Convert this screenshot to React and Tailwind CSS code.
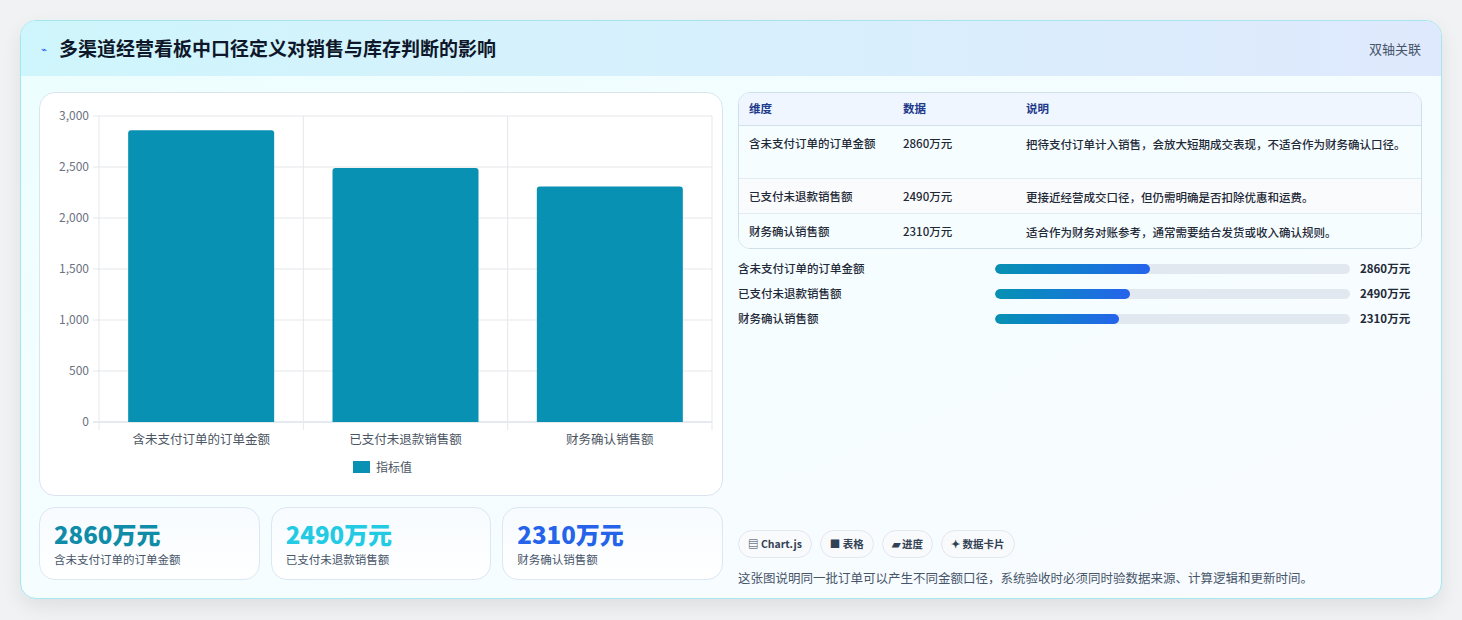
export default function App() {
  const bars = [
    { label: "含未支付订单的订单金额", v: 2860 },
    { label: "已支付未退款销售额", v: 2490 },
    { label: "财务确认销售额", v: 2310 },
  ];
  const ticks = [3000, 2500, 2000, 1500, 1000, 500, 0];
  // svg coords relative to chart card (x0=39,y0=92)
  const px0 = 59, px1 = 672, py0 = 23, py1 = 329;
  const cw = (px1 - px0) / 3;
  const font = { fontFamily: '"Noto Sans CJK SC", "Noto Sans", sans-serif' };
  return (
    <div className="w-[1462px] h-[620px] bg-[#f1f2f4] pt-5 pl-5" style={font}>
      <div className="w-[1422px] h-[579px] rounded-2xl border border-[#a5e6ef] bg-gradient-to-br from-[#ecfeff] via-[#f5fdff] to-[#f8fbff] shadow-[0_8px_20px_rgba(0,0,0,0.08)] overflow-hidden flex flex-col">
        <div className="h-[55px] flex items-center justify-between px-5 bg-gradient-to-r from-[#cff6fc] to-[#dfe9fd] shrink-0">
          <div className="flex items-center gap-3">
            <span className="text-[10px] text-[#2563eb]">⌁</span>
            <span className="text-[19px] font-bold text-[#0f172a]">多渠道经营看板中口径定义对销售与库存判断的影响</span>
          </div>
          <span className="text-[13px] text-[#475569]">双轴关联</span>
        </div>
        <div className="flex gap-[15px] px-[18px] pt-[16px]">
          <div className="w-[684px] flex flex-col gap-[11px]">
            <div className="h-[404px] rounded-2xl border border-[#dbe4ee] bg-white">
              <svg width="684" height="404" className="block">
                {ticks.map((t, i) => {
                  const y = py0 + ((py1 - py0) * i) / 6;
                  return (
                    <g key={t}>
                      <line x1={px0 - 6} x2={px1} y1={y} y2={y} stroke={t === 0 ? "#cbd5e1" : "#e5e7eb"} />
                      <text x={px0 - 10} y={y + 4} textAnchor="end" fontSize="12" fill="#6b7280" style={font}>{t.toLocaleString("en-US")}</text>
                    </g>
                  );
                })}
                {[0, 1, 2, 3].map((i) => (
                  <line key={i} x1={px0 + cw * i} x2={px0 + cw * i} y1={py0} y2={py1 + 8} stroke="#e5e7eb" />
                ))}
                {bars.map((b, i) => {
                  const h = ((py1 - py0) * b.v) / 3000;
                  const cx = px0 + cw * i + cw / 2;
                  return (
                    <g key={b.label}>
                      <path d={`M${cx - 73} ${py1} V${py1 - h + 3} Q${cx - 73} ${py1 - h} ${cx - 70} ${py1 - h} H${cx + 70} Q${cx + 73} ${py1 - h} ${cx + 73} ${py1 - h + 3} V${py1} Z`} fill="#0891b2" />
                      <text x={cx} y={py1 + 22} textAnchor="middle" fontSize="12.5" fill="#4b5563" style={font}>{b.label}</text>
                    </g>
                  );
                })}
                <rect x="313" y="368" width="17" height="12" fill="#0891b2" />
                <text x="336" y="379" fontSize="12" fill="#4b5563" style={font}>指标值</text>
              </svg>
            </div>
            <div className="grid grid-cols-3 gap-[11px]">
              {[
                ["2860万元", "含未支付订单的订单金额", "text-[#0e8ca8]"],
                ["2490万元", "已支付未退款销售额", "text-[#22cbe3]"],
                ["2310万元", "财务确认销售额", "text-[#2563eb]"],
              ].map(([v, l, c]) => (
                <div key={l} className="h-[73px] rounded-2xl border border-[#dbe7f3] bg-gradient-to-b from-[#f7fbff] to-white px-[14px] pt-[10px]">
                  <div className={`text-[24px] font-extrabold leading-[32px] ${c}`}>{v}</div>
                  <div className="text-[11.5px] text-[#475569] mt-[1px]">{l}</div>
                </div>
              ))}
            </div>
          </div>
          <div className="w-[684px] flex flex-col">
            <div className="rounded-xl border border-[#cfe0ea] overflow-hidden bg-white text-[11.5px]">
              <div className="flex h-[33px] items-center bg-[#f0f6ff] border-b border-[#cfe0ea] text-[#1e3a8a] font-semibold">
                <div className="w-[164px] pl-[10px]">维度</div>
                <div className="w-[123px]">数据</div>
                <div className="flex-1">说明</div>
              </div>
              {[
                ["含未支付订单的订单金额", "2860万元", "把待支付订单计入销售，会放大短期成交表现，不适合作为财务确认口径。", "h-[53px] bg-[#f5fdff]"],
                ["已支付未退款销售额", "2490万元", "更接近经营成交口径，但仍需明确是否扣除优惠和运费。", "h-[35px] bg-[#fafbfc]"],
                ["财务确认销售额", "2310万元", "适合作为财务对账参考，通常需要结合发货或收入确认规则。", "h-[34px] bg-[#f5fdff]"],
              ].map(([a, b, c, h], i) => (
                <div key={a} className={`flex items-start pt-[9px] text-[#1f2937] font-medium ${h} ${i < 2 ? "border-b border-[#e3ecf2]" : ""}`}>
                  <div className="w-[164px] pl-[10px]">{a}</div>
                  <div className="w-[123px]">{b}</div>
                  <div className="flex-1 pr-3 leading-[20px] -mt-[1px]">{c}</div>
                </div>
              ))}
            </div>
            <div className="flex flex-col gap-[8px] mt-[11px]">
              {[["含未支付订单的订单金额", "2860万元", 43.6], ["已支付未退款销售额", "2490万元", 38], ["财务确认销售额", "2310万元", 34.9]].map(([l, v, p]) => (
                <div key={l} className="flex items-center h-[17px] text-[11.5px] text-[#1f2937] font-medium">
                  <div className="w-[257px]">{l}</div>
                  <div className="w-[355px] h-[10px] rounded-full bg-[#e2e8f0] overflow-hidden">
                    <div className="h-full rounded-full bg-gradient-to-r from-[#0891b2] to-[#2563eb]" style={{ width: `${p}%` }} />
                  </div>
                  <div className="pl-[10px] font-bold">{v}</div>
                </div>
              ))}
            </div>
            <div className="flex-1" />
            <div className="flex gap-[8px] mt-[203px]">
              {["▤ Chart.js", "■ 表格", "▰ 进度", "✦ 数据卡片"].map((t) => (
                <span key={t} className="h-[28px] px-[9px] rounded-full border border-[#e2e8f0] bg-[#f8fafc] text-[10.5px] font-bold text-[#334155] flex items-center">{t}</span>
              ))}
            </div>
            <div className="text-[12.5px] text-[#475569] mt-[11px]">这张图说明同一批订单可以产生不同金额口径，系统验收时必须同时验数据来源、计算逻辑和更新时间。</div>
          </div>
        </div>
      </div>
    </div>
  );
}
